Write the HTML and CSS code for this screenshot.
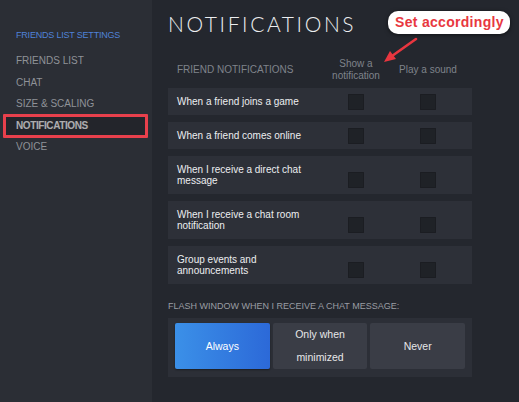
FILE: index.html
```html
<!DOCTYPE html>
<html lang="en">
<head>
<meta charset="utf-8">
<title>Friends List Settings - Notifications</title>
<link rel="stylesheet" href="styles.css">
</head>
<body>
<aside class="sidebar">
  <div class="sidebar-title">FRIENDS LIST SETTINGS</div>
  <nav class="nav">
    <a class="nav-item">FRIENDS LIST</a>
    <a class="nav-item">CHAT</a>
    <a class="nav-item">SIZE &amp; SCALING</a>
    <a class="nav-item nav-item--active">NOTIFICATIONS</a>
    <a class="nav-item">VOICE</a>
  </nav>
</aside>
<main class="content">
  <h1 class="page-title">NOTIFICATIONS</h1>

  <div class="table-head">
    <div class="label">FRIEND NOTIFICATIONS</div>
    <div class="col">Show a<br>notification</div>
    <div class="col">Play a sound</div>
  </div>

  <div class="rows">
    <div class="row">
      <div class="label">When a friend joins a game</div>
      <div class="col"><span class="check"></span></div>
      <div class="col"><span class="check"></span></div>
    </div>
    <div class="row">
      <div class="label">When a friend comes online</div>
      <div class="col"><span class="check"></span></div>
      <div class="col"><span class="check"></span></div>
    </div>
    <div class="row row--tall">
      <div class="label">When I receive a direct chat message</div>
      <div class="col"><span class="check"></span></div>
      <div class="col"><span class="check"></span></div>
    </div>
    <div class="row row--tall">
      <div class="label">When I receive a chat room notification</div>
      <div class="col"><span class="check"></span></div>
      <div class="col"><span class="check"></span></div>
    </div>
    <div class="row row--tall">
      <div class="label">Group events and announcements</div>
      <div class="col"><span class="check"></span></div>
      <div class="col"><span class="check"></span></div>
    </div>
  </div>

  <div class="flash-label">FLASH WINDOW WHEN I RECEIVE A CHAT MESSAGE:</div>
  <div class="segmented">
    <button class="seg seg--active">Always</button>
    <button class="seg seg--multi">Only when<br>minimized</button>
    <button class="seg">Never</button>
  </div>

  <div class="callout">Set accordingly</div>
  <svg class="callout-arrow" width="40" height="30" viewBox="0 0 40 30">
    <line x1="36" y1="4" x2="12" y2="21" stroke="#e8363f" stroke-width="2.6" stroke-linecap="round"/>
    <polygon points="4,27 10,16 16,24" fill="#e8363f"/>
  </svg>
</main>
</body>
</html>
```

FILE: styles.css
```css
* { box-sizing: border-box; }

html, body {
  margin: 0;
  height: 402px;
  overflow: hidden;
}

body {
  display: flex;
  background: #24272e;
  font-family: "Liberation Sans", Arial, sans-serif;
  color: #e4e5e7;
}

/* Sidebar */
.sidebar {
  flex: 0 0 152px;
  background: #2b2e35;
  padding-top: 29px;
}

.sidebar-title {
  padding-left: 16px;
  font-size: 9px;
  line-height: 12px;
  color: #4f82d8;
  margin-bottom: 9px;
  letter-spacing: -0.2px;
}

.nav {
  display: flex;
  flex-direction: column;
}

.nav-item {
  position: relative;
  display: block;
  padding-left: 16px;
  font-size: 10px;
  line-height: 21.5px;
  color: #8f9298;
}

.nav-item--active {
  color: #ffffff;
  font-weight: bold;
  letter-spacing: -0.4px;
}

.nav-item--active::after {
  content: "";
  position: absolute;
  left: 3px;
  right: 4px;
  top: -1px;
  bottom: -2px;
  border: 3px solid #e8404c;
  border-radius: 1px;
  background: rgba(20, 21, 27, 0.35);
  z-index: -0;
}

.nav-item--active::after { mix-blend-mode: normal; }

/* Main */
.content {
  position: relative;
  flex: 1;
  padding: 11px 47px 0 16px;
}

.page-title {
  margin: 0 0 21px;
  font-family: Lato, "Open Sans", sans-serif;
  font-weight: 300;
  font-size: 21px;
  line-height: 26px;
  letter-spacing: 2.6px;
  color: #eceef0;
}

.table-head,
.row {
  display: flex;
  align-items: center;
  padding: 0 8px 0 9px;
}

.label {
  flex: 0 0 135px;
}

.col {
  flex: 0 0 72px;
  display: flex;
  justify-content: center;
  text-align: center;
}

.label + .col {
  margin-left: auto;
}

.table-head {
  height: 24px;
  margin-bottom: 6px;
  font-size: 10px;
  line-height: 12px;
  color: #7f838b;
}

.rows {
  display: flex;
  flex-direction: column;
  gap: 7px;
}

.row {
  height: 27px;
  background: #2d3038;
  font-size: 10px;
  line-height: 11px;
  color: #eceef0;
}

.row--tall {
  height: 38px;
}

.check {
  display: block;
  width: 16px;
  height: 16px;
  background: #1f2227;
  border-radius: 1px;
  box-shadow: inset 0 0 0 1px #1b1d22;
}

.row--tall .check {
  margin-top: 10px;
}

.flash-label {
  margin-top: 17px;
  font-size: 9px;
  line-height: 11px;
  color: #9a9da3;
}

.segmented {
  display: flex;
  gap: 3px;
  margin-top: 6px;
  padding: 5px 7px 8px;
  background: #2c2f37;
}

.seg {
  flex: 1;
  height: 46px;
  border: 0;
  border-radius: 2px;
  padding: 0;
  background: #3a3d46;
  color: #e6e7e9;
  font-family: "Liberation Sans", Arial, sans-serif;
  font-size: 10.5px;
  line-height: 23px;
}

.seg--active {
  background: linear-gradient(90deg, #3b90e8, #2c69d8);
  color: #ffffff;
  box-shadow: 0 1px 2px rgba(0,0,0,0.4);
}

/* Annotation overlay */
.callout {
  position: absolute;
  left: 236px;
  top: 11px;
  padding: 3px 6px 4px 7px;
  background: #ffffff;
  border-radius: 10px;
  box-shadow: 0 1px 4px rgba(0,0,0,0.55);
  color: #e8383f;
  font-family: "Liberation Sans", Arial, sans-serif;
  font-weight: bold;
  font-size: 14px;
  line-height: 16px;
  letter-spacing: 0.3px;
}

.callout-arrow {
  position: absolute;
  left: 228px;
  top: 35px;
}
```
